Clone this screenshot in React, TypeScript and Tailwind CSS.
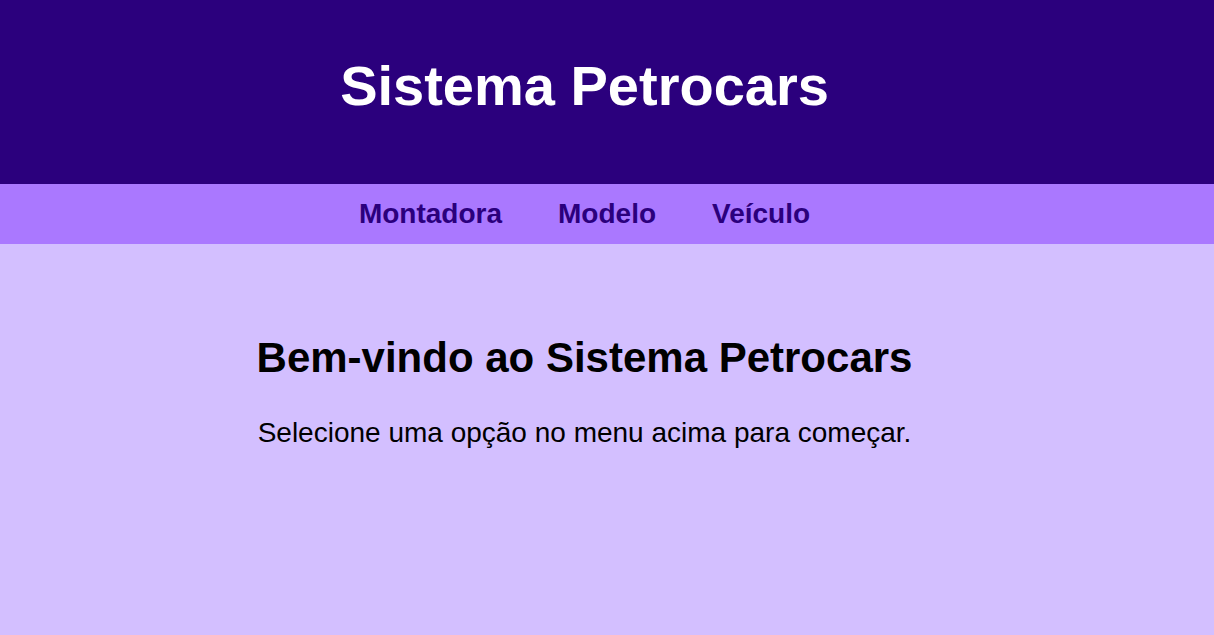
import React from "react";

export default function App() {
    const links = ["Montadora", "Modelo", "Veículo"];

    return (
        <div className="min-h-[635px] bg-[#d3bfff] font-['Liberation_Sans',Arial,sans-serif]">
            {/* Header */}
            <header className="bg-[#2b007d]">
                <div className="w-[1169px] h-[184px] pt-[54px] flex justify-center">
                    <h1 className="text-[56px] leading-[64px] font-bold text-white">Sistema Petrocars</h1>
                </div>
            </header>

            {/* Nav */}
            <nav className="bg-[#aa78ff]">
                <div className="w-[1169px] h-[60px] flex items-center justify-center gap-[56px]">
                    {links.map((l) => (
                        <a key={l} href="#" className="text-[28px] leading-[32px] font-bold text-[#2b007d]">
                            {l}
                        </a>
                    ))}
                </div>
            </nav>

            {/* Content */}
            <main className="w-[1169px] pt-[90px] flex flex-col items-center text-black">
                <h2 className="text-[42px] leading-[48px] font-bold">Bem-vindo ao Sistema Petrocars</h2>
                <p className="mt-[35px] text-[28px] leading-[32px]">Selecione uma opção no menu acima para começar.</p>
            </main>
        </div>
    );
}
